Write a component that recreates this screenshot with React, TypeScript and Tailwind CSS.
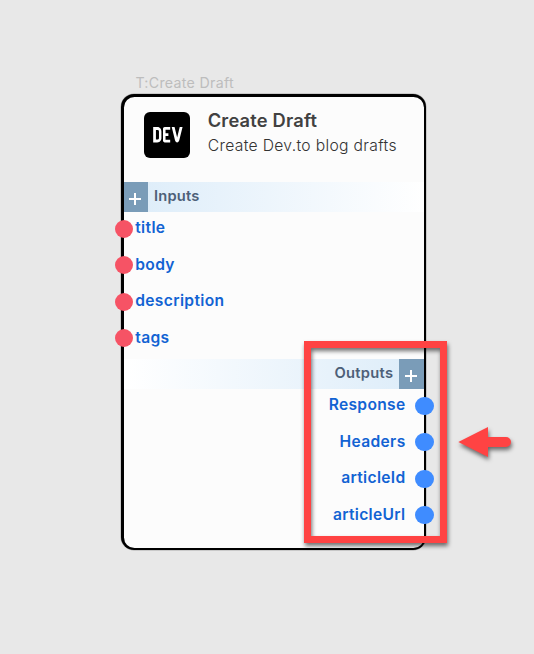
import { FaDev } from "react-icons/fa";

const inputs = ["title", "body", "description", "tags"];
const outputs = ["Response", "Headers", "articleId", "articleUrl"];

function AddButton() {
  return (
    <div className="flex h-[30px] w-[24.5px] shrink-0 items-center justify-center bg-[#7a9cb8]">
      <svg className="mt-[3px] -ml-px size-3" viewBox="0 0 12 12" stroke="#fff" strokeWidth="2">
        <path d="M6 0v12M0 6h12" />
      </svg>
    </div>
  );
}

function InputPort({ name }: { name: string }) {
  return (
    <div className="-ml-[9px] flex h-[36.5px] items-center">
      <span className="size-[18.4px] shrink-0 rounded-full bg-[#f65365]" />
      <span className="-mt-[2px] ml-[2.3px] text-[15.6px] font-semibold tracking-[0.36px] text-[#1263d3]">{name}</span>
    </div>
  );
}

function OutputPort({ name }: { name: string }) {
  return (
    <div className="-mr-[10px] flex h-[36.5px] items-center justify-end">
      <span className="-mt-[2px] mr-[9.6px] text-[15.6px] font-semibold tracking-[0.32px] text-[#1263d3]">{name}</span>
      <span className="size-[18.4px] shrink-0 rounded-full bg-[#3f8cff]" />
    </div>
  );
}

export default function App() {
  return (
    <div className="relative h-[654px] w-[534px] overflow-hidden bg-[#e8e8e8] pt-[72px] pl-[121px] font-['Inter',sans-serif]">
      <div className="h-[22px] pl-[14.4px] text-[14.2px] leading-[22px] tracking-[0.3px] text-[#bdbdbd]">T:Create Draft</div>
      <div className="h-[456px] w-[305px] rounded-[13px] bg-black p-[2.5px] shadow-[0_0_0_0.5px_#0004]">
        <div className="flex h-full flex-col rounded-[10.5px] bg-[#fcfcfc]">
          <div className="flex h-[85.5px] shrink-0 pt-[15.5px] pl-[20.9px]">
            <div className="flex size-[46px] shrink-0 items-center justify-center rounded-[6px] bg-black">
              <div className="flex size-9 items-center justify-center overflow-hidden bg-white">
                <FaDev preserveAspectRatio="none" className="h-[47.5px] w-[39px] shrink-0 text-black" />
              </div>
            </div>
            <div className="ml-[17.3px] -mt-[4.5px] whitespace-nowrap">
              <div className="text-[18.3px] leading-[25px] font-semibold tracking-[0.19px] text-[#414141]">Create Draft</div>
              <div className="text-[15.7px] leading-[25px] font-light tracking-[0.32px] text-[#333]">Create Dev.to blog drafts</div>
            </div>
          </div>
          <div className="flex h-[30px] shrink-0 bg-linear-to-r from-[#dcecf9] to-white">
            <AddButton />
            <span className="ml-[6px] text-[14.7px] leading-[29px] font-semibold tracking-[0.2px] text-[#4d6078]">Inputs</span>
          </div>
          <div className="-mt-[1.5px] h-[148.5px] shrink-0">
            {inputs.map((name) => <InputPort key={name} name={name} />)}
          </div>
          <div className="flex h-[30px] shrink-0 justify-end bg-linear-to-l from-[#dcecf9] to-white">
            <span className="mr-[5.7px] text-[14.7px] leading-[29px] font-semibold tracking-[0.3px] text-[#4d6078]">Outputs</span>
            <AddButton />
          </div>
          <div className="-mt-[1.5px]">
            {outputs.map((name) => <OutputPort key={name} name={name} />)}
          </div>
        </div>
      </div>
      <div className="absolute top-[341px] left-[304px] h-[202px] w-[143px]">
        <svg className="overflow-visible drop-shadow-[1px_3px_2px_rgba(0,0,0,0.55)]" width="143" height="202">
          <rect x="3.5" y="3.5" width="136" height="195" fill="none" stroke="#ff4343" strokeWidth="7" />
        </svg>
      </div>
      <svg
        className="absolute top-[427px] left-[458px] overflow-visible drop-shadow-[1px_3px_2px_rgba(0,0,0,0.55)]"
        width="53"
        height="30"
      >
        <path d="M.3 15 30 0v10h18a5 5 0 0 1 0 10H30v10z" fill="#ff4343" />
      </svg>
    </div>
  );
}
